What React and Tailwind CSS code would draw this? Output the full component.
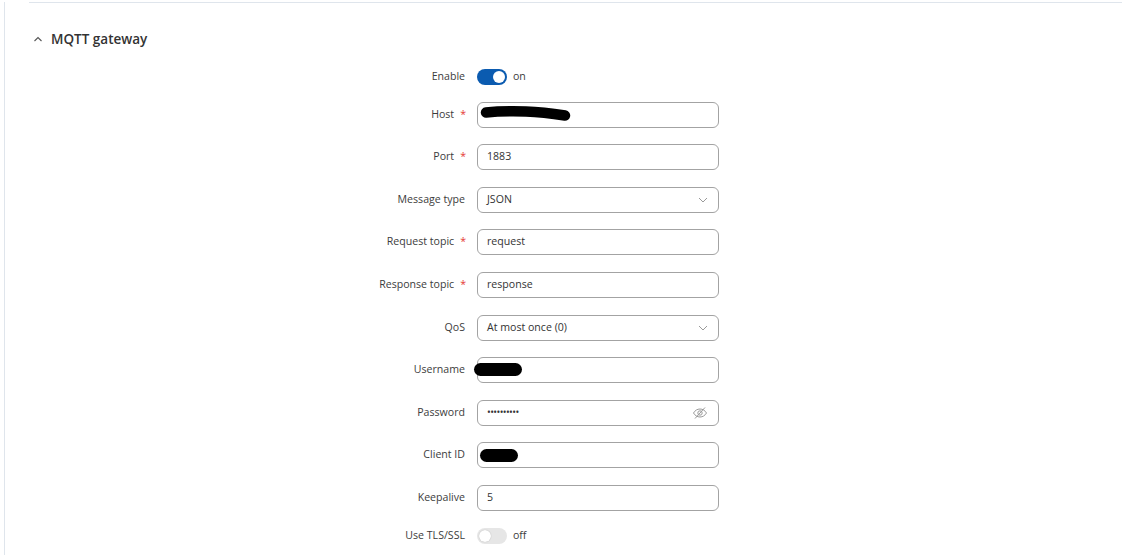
import React from "react";

const font = { fontFamily: '"Open Sans", "Noto Sans", sans-serif' };

function Label({ text, req }) {
  return (
    <div className="w-[437px] shrink-0 text-right text-[10.6px] text-[#3c3c3c] pr-[1px]">
      {text}
      {req && <span className="text-[#e53935] ml-[6px] mr-[-1px]">*</span>}
    </div>
  );
}

function Input({ children, right }) {
  return (
    <div className="relative ml-[11px] w-[242px] h-[26px] border border-[#a3a3a3] rounded-[6px] flex items-center pl-[9px] text-[10.6px] text-[#333]">
      {children}
      {right && <div className="absolute right-[10px] top-0 h-full flex items-center">{right}</div>}
    </div>
  );
}

function Chevron() {
  return (
    <svg width="10" height="6" viewBox="0 0 10 6" fill="none">
      <path d="M1 1l4 4 4-4" stroke="#9a9a9a" strokeWidth="1" />
    </svg>
  );
}

function EyeOff() {
  return (
    <svg width="16" height="14" viewBox="0 0 16 14" fill="none" stroke="#9a9a9a" strokeWidth="1">
      <path d="M1.5 7c1.6-2.6 3.8-4 6.5-4s4.9 1.4 6.5 4c-1.6 2.6-3.8 4-6.5 4S3.1 9.6 1.5 7z" />
      <circle cx="8" cy="7" r="2.2" />
      <path d="M3 12.5L13 1.5" />
    </svg>
  );
}

function Toggle({ on }) {
  return (
    <div className="ml-[11px] flex items-center">
      <div
        className={
          on
            ? "w-[30px] h-[16px] rounded-full bg-[#0b5bb0] flex items-center justify-end pr-[2px]"
            : "w-[30px] h-[16px] rounded-full bg-[#e6e6e6] flex items-center justify-start pl-[2px]"
        }
      >
        <div className={on ? "w-[12px] h-[12px] rounded-full bg-white" : "w-[12px] h-[12px] rounded-full bg-white shadow-[0_0_1px_rgba(0,0,0,0.3)]"} />
      </div>
      <span className="ml-[6px] text-[10.6px] text-[#3c3c3c]">{on ? "on" : "off"}</span>
    </div>
  );
}

function Row({ label, req, children, toggle }) {
  return (
    <div className={toggle ? "flex items-center h-[16px]" : "flex items-center h-[26px]"}>
      <Label text={label} req={req} />
      {children}
    </div>
  );
}

export default function App() {
  return (
    <div className="w-[1122px] h-[555px] bg-white overflow-hidden pl-[4px]" style={font}>
      <div className="h-full border-l border-[#dfe5ec] pl-[24px]">
        <div className="mt-[2px] border-t border-[#dfe5ec]">
          <div className="flex items-center h-[20px] mt-[26px] pl-[4px]">
            <svg width="10" height="6" viewBox="0 0 10 6" fill="none" className="mt-[-1px]">
              <path d="M1.5 5L5 1.5 8.5 5" stroke="#555" strokeWidth="1.1" />
            </svg>
            <span className="ml-[8px] text-[13.5px] font-semibold text-[#333]">MQTT gateway</span>
          </div>
          <div className="mt-[20px] flex flex-col gap-[16.6px]">
            <Row label="Enable" toggle>
              <Toggle on />
            </Row>
            <Row label="Host" req>
              <Input>
                <svg width="92" height="18" viewBox="0 0 92 18" className="ml-[-7px] mt-[1px]">
                  <path d="M6 6.5c10-1 24-1.5 40-1 14 0.5 26 2 39 4" stroke="#000" strokeWidth="10.5" strokeLinecap="round" fill="none" />
                </svg>
              </Input>
            </Row>
            <Row label="Port" req>
              <Input>1883</Input>
            </Row>
            <Row label="Message type">
              <Input right={<Chevron />}>JSON</Input>
            </Row>
            <Row label="Request topic" req>
              <Input>request</Input>
            </Row>
            <Row label="Response topic" req>
              <Input>response</Input>
            </Row>
            <Row label="QoS">
              <Input right={<Chevron />}>At most once (0)</Input>
            </Row>
            <Row label="Username">
              <div className="relative">
                <Input></Input>
                <div className="absolute left-[8px] top-[6px] w-[48px] h-[13px] rounded-full bg-black" />
              </div>
            </Row>
            <Row label="Password">
              <Input right={<EyeOff />}>
                <span className="tracking-[-0.6px] text-[10px] text-[#333]">••••••••••</span>
              </Input>
            </Row>
            <Row label="Client ID">
              <Input>
                <div className="ml-[-7px] mt-[1px] w-[38px] h-[13px] rounded-full bg-black" />
              </Input>
            </Row>
            <Row label="Keepalive">
              <Input>5</Input>
            </Row>
            <Row label="Use TLS/SSL" toggle>
              <Toggle />
            </Row>
          </div>
        </div>
      </div>
    </div>
  );
}
